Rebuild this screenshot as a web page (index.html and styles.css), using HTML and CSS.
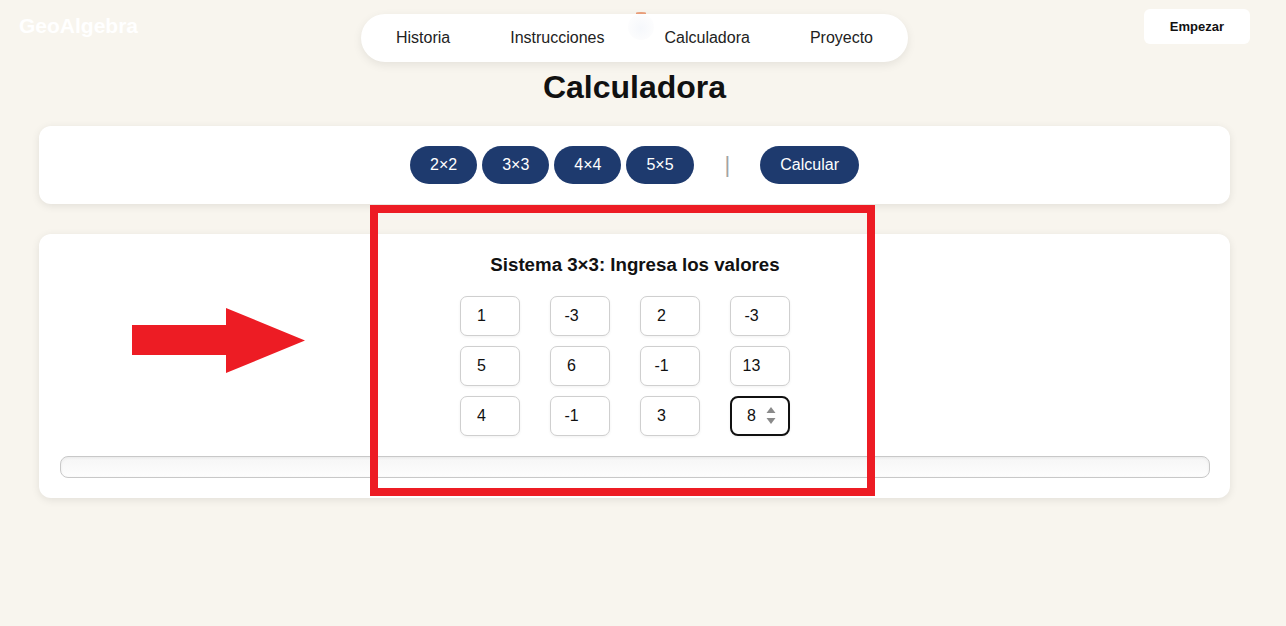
FILE: index.html
```html
<!DOCTYPE html>
<html lang="es">
<head>
<meta charset="utf-8">
<title>GeoAlgebra - Calculadora</title>
<link rel="stylesheet" href="styles.css">
</head>
<body>
<div class="page">
  <header class="topbar">
    <div class="logo">GeoAlgebra</div>
    <nav class="nav">
      <span class="nav-orb"></span>
      <span class="nav-orb-edge"></span>
      <a class="nav-link" href="#">Historia</a>
      <a class="nav-link" href="#">Instrucciones</a>
      <a class="nav-link" href="#">Calculadora</a>
      <a class="nav-link" href="#">Proyecto</a>
    </nav>
    <div class="actions"><button class="start-btn">Empezar</button></div>
  </header>

  <main class="main">
    <h1 class="title">Calculadora</h1>

    <section class="card toolbar">
      <button class="pill">2×2</button>
      <button class="pill">3×3</button>
      <button class="pill">4×4</button>
      <button class="pill">5×5</button>
      <span class="sep">|</span>
      <button class="pill calc">Calcular</button>
    </section>

    <section class="card system">
      <h2 class="sys-title">Sistema 3×3: Ingresa los valores</h2>
      <div class="grid">
        <input class="cell" type="text" value="1">
        <input class="cell" type="text" value="-3">
        <input class="cell" type="text" value="2">
        <input class="cell" type="text" value="-3">
        <input class="cell" type="text" value="5">
        <input class="cell" type="text" value="6">
        <input class="cell" type="text" value="-1">
        <input class="cell" type="text" value="13">
        <input class="cell" type="text" value="4">
        <input class="cell" type="text" value="-1">
        <input class="cell" type="text" value="3">
        <div class="cell-wrap">
          <input class="cell focused" type="text" value="8">
          <svg class="spin" width="10" height="20" viewBox="0 0 10 20"><polygon points="5,1 9.5,7 0.5,7" fill="#8a8a8a"/><polygon points="0.5,12 9.5,12 5,18" fill="#8a8a8a"/></svg>
        </div>
      </div>
      <div class="result"></div>
    </section>
  </main>

  <div class="annot-box"></div>
  <svg class="annot-arrow" width="174" height="66" viewBox="0 0 174 66"><polygon points="0,17 94,17 94,0 173,32.5 94,65 94,47 0,47" fill="#ed1c24"/></svg>
</div>
</body>
</html>
```

FILE: styles.css
```css
* { box-sizing: border-box; }
html, body { margin: 0; padding: 0; }
body {
  background: #f8f5ee;
  font-family: "Liberation Sans", Arial, sans-serif;
  color: #111;
  overflow: hidden;
}
.page {
  position: relative;
  width: 1269px;
  height: 626px;
}
.topbar {
  display: grid;
  grid-template-columns: 1fr auto 1fr;
  align-items: start;
  padding: 0 19px;
}
.logo {
  margin-top: 14px;
  font-size: 21px;
  font-weight: bold;
  color: #ffffff;
  line-height: 24px;
}
.nav {
  position: relative;
  margin-top: 14px;
  height: 48px;
  display: flex;
  align-items: center;
  gap: 60px;
  padding: 0 35px;
  background: #fff;
  border-radius: 24px;
  box-shadow: 0 3px 10px rgba(0, 0, 0, 0.08);
}
.nav-orb {
  position: absolute;
  left: 267px;
  top: 0;
  width: 26px;
  height: 26px;
  border-radius: 50%;
  background: radial-gradient(circle at 50% 55%, rgba(228, 234, 245, 0.35) 0%, rgba(240, 242, 247, 0.25) 55%, rgba(255, 255, 255, 0) 100%);
}
.nav-orb-edge {
  position: absolute;
  left: 275px;
  top: -2px;
  width: 10px;
  height: 2px;
  border-radius: 50% 50% 0 0;
  background: #e0662e;
  opacity: 0.6;
}
.nav-link {
  position: relative;
  font-size: 16px;
  color: #222;
  text-decoration: none;
  line-height: 20px;
}
.actions {
  display: flex;
  justify-content: flex-end;
}
.start-btn {
  margin-top: 9px;
  height: 35px;
  padding: 0 26px;
  border: none;
  border-radius: 6px;
  background: #fff;
  font-family: "Liberation Sans", Arial, sans-serif;
  font-size: 13px;
  font-weight: bold;
  color: #111;
}
.main {
  padding: 0 39px;
}
.title {
  margin: 7px 0 21px;
  text-align: center;
  font-size: 32px;
  line-height: 36px;
  font-weight: bold;
  color: #111;
}
.card {
  background: #fff;
  border-radius: 12px;
  box-shadow: 0 2px 8px rgba(0, 0, 0, 0.09);
}
.toolbar {
  display: flex;
  justify-content: center;
  align-items: center;
  gap: 5px;
  padding: 20px;
}
.pill {
  height: 38px;
  padding: 0 20px;
  border: none;
  border-radius: 19px;
  background: #1e3a6e;
  color: #fff;
  font-family: "Liberation Sans", Arial, sans-serif;
  font-size: 16px;
}
.sep {
  margin: 0 25px 0 26px;
  font-size: 22px;
  color: #a3a3a3;
  line-height: 24px;
}
.system {
  margin-top: 30px;
  padding: 20px 20px 20px 21px;
  display: flex;
  flex-direction: column;
  align-items: center;
}
.sys-title {
  margin: 0 0 21px;
  font-size: 18.7px;
  line-height: 21px;
  font-weight: bold;
  color: #111;
}
.grid {
  display: grid;
  grid-template-columns: repeat(4, 60px);
  grid-auto-rows: 40px;
  column-gap: 30px;
  row-gap: 10px;
  padding-right: 20px;
}
.cell {
  width: 60px;
  height: 40px;
  border: 1px solid #cfcfcf;
  border-radius: 7px;
  padding: 0 17px 0 0;
  text-align: center;
  background: #fff;
  font-family: "Liberation Sans", Arial, sans-serif;
  font-size: 16px;
  color: #111;
  box-shadow: 0 1px 3px rgba(0, 0, 0, 0.06);
  outline: none;
}
.cell-wrap {
  position: relative;
  width: 60px;
  height: 40px;
}
.cell.focused {
  border: 2px solid #111;
  border-radius: 8px;
}
.spin {
  position: absolute;
  left: 36px;
  top: 10px;
}
.result {
  align-self: stretch;
  margin-top: 20px;
  height: 22px;
  border: 1px solid #c8c8c8;
  border-radius: 8px;
  background: linear-gradient(#f6f6f6, #fdfdfd);
  box-shadow: inset 0 1px 3px rgba(0, 0, 0, 0.06);
}
.annot-box {
  position: absolute;
  left: 370px;
  top: 205px;
  width: 505px;
  height: 291px;
  border: 8px solid #ed1c24;
}
.annot-arrow {
  position: absolute;
  left: 132px;
  top: 308px;
}
```
